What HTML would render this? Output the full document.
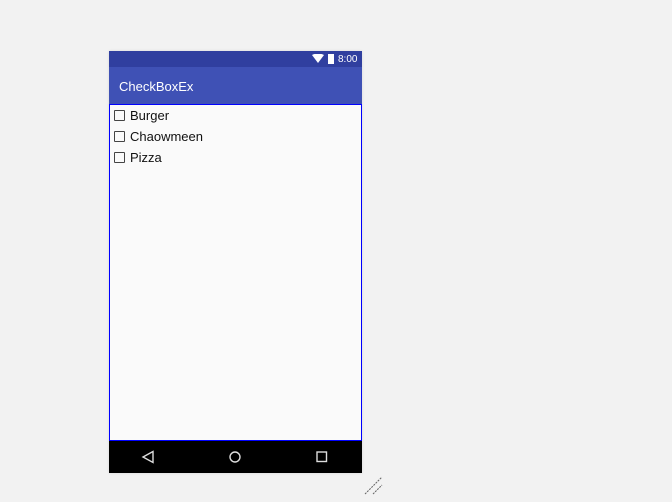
<!DOCTYPE html>
<html><head><style>
body{margin:0;width:672px;height:502px;background:#f2f2f2;position:relative;overflow:hidden;font-family:"Liberation Sans",sans-serif}
.ph{position:absolute;left:109px;top:51px;width:253px;height:422px;box-shadow:0 0 3px rgba(0,0,0,.1)}
.sb{position:absolute;left:0;top:0;width:253px;height:16px;background:#303f9f}
.tb{position:absolute;left:0;top:16px;width:253px;height:37px;background:#3f51b5;color:#fff;font-size:13px}
.ct{position:absolute;left:0;top:53px;width:251px;height:335px;background:#fafafa;border:1px solid #0000ff}
.nv{position:absolute;left:0;top:390px;width:253px;height:32px;background:#000}
.it{position:absolute;left:4px;font-size:13px;color:#111}
.cb{display:inline-block;width:9px;height:9px;border:1.5px solid #444;border-radius:1px;vertical-align:-1px;margin-right:5px}
</style></head><body>
<div class="ph">
<div class="sb">
<svg style="position:absolute;left:203px;top:3px" width="24" height="11"><path d="M0 1 Q6 -2 12 1 L6 9Z" fill="#fff"/><rect x="16" y="0" width="6" height="10" fill="#fff"/></svg>
<span style="position:absolute;left:229px;top:3px;color:#fff;font-size:10px">8:00</span>
</div>
<div class="tb"><span style="position:absolute;left:10px;top:12px">CheckBoxEx</span></div>
<div class="ct">
<div class="it" style="top:3px"><span class="cb"></span>Burger</div>
<div class="it" style="top:24px"><span class="cb"></span>Chaowmeen</div>
<div class="it" style="top:45px"><span class="cb"></span>Pizza</div>
</div>
<div class="nv">
<svg width="253" height="32"><path d="M44 10.5 L34 16 L44 21.5Z" fill="none" stroke="#ddd" stroke-width="1.4"/><circle cx="126" cy="16" r="5" fill="none" stroke="#ddd" stroke-width="1.4"/><rect x="208" y="11" width="9.5" height="9.5" fill="none" stroke="#ddd" stroke-width="1.4"/></svg>
</div>
</div>
<svg style="position:absolute;left:364px;top:476px" width="20" height="20"><path d="M1 18 L18 1 M9 18 L18 9" stroke="#666" stroke-width="1" stroke-dasharray="2 1"/></svg>
</body></html>
